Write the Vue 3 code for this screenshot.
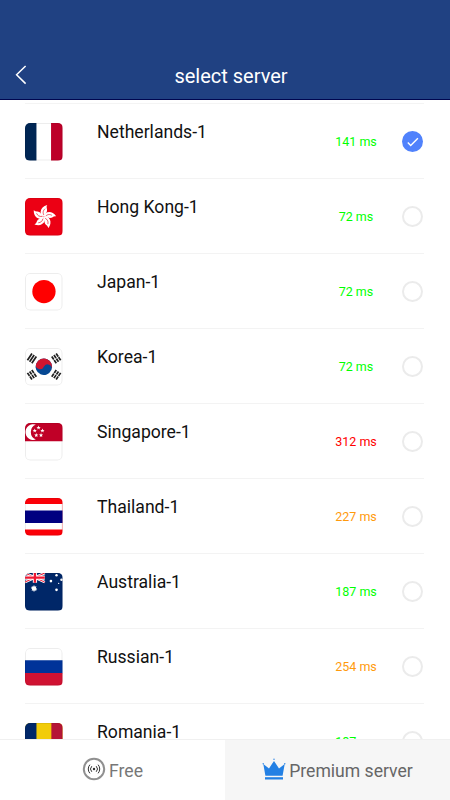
<script setup>
const servers = [
  { flag: 'nl', name: 'Netherlands-1', ping: 141, level: 'good', selected: true },
  { flag: 'hk', name: 'Hong Kong-1', ping: 72, level: 'good' },
  { flag: 'jp', name: 'Japan-1', ping: 72, level: 'good' },
  { flag: 'kr', name: 'Korea-1', ping: 72, level: 'good' },
  { flag: 'sg', name: 'Singapore-1', ping: 312, level: 'bad' },
  { flag: 'th', name: 'Thailand-1', ping: 227, level: 'medium' },
  { flag: 'au', name: 'Australia-1', ping: 187, level: 'good' },
  { flag: 'ru', name: 'Russian-1', ping: 254, level: 'medium' },
  { flag: 'ro', name: 'Romania-1', ping: 187, level: 'good' }
]
const petals = [0, 72, 144, 216, 288]
const stars = [[13.4, 4.6], [9.6, 7.6], [17.2, 7.6], [11.1, 12.1], [15.8, 12.1]]
const trigrams = [
  { x: 6.8, y: 10.2, a: -56 },
  { x: 30.8, y: 10.2, a: 56 },
  { x: 6.8, y: 26.4, a: 56 },
  { x: 30.8, y: 26.4, a: -56 }
]
</script>

<template>
  <div class="screen">
    <header class="header">
      <svg class="back" viewBox="0 0 12 20"><path d="M10.6 1 1.6 9.8l9 8.8" /></svg>
      <h1>select server</h1>
    </header>

    <main class="list">
      <div v-for="s in servers" :key="s.name" class="row">
        <svg class="flag" viewBox="0 0 37 37">
          <g v-if="s.flag === 'nl'">
            <path fill="#fff" d="M0 0h37v37H0z" />
            <path fill="#002654" d="M0 0h11.3v37H0z" />
            <path fill="#bd0029" d="M25.7 0H37v37H25.7z" />
          </g>
          <g v-else-if="s.flag === 'hk'">
            <path fill="#ec0014" d="M0 0h37v37H0z" />
            <g transform="translate(18.7 18.6) rotate(10)">
              <g v-for="a in petals" :key="a" :transform="`rotate(${a})`">
                <path fill="#fff" d="M-.6.600C-4.600-.8-6.500-8.500 1.200-12c-1.200 2.800 1.300 3.800.7 6.600C1.400-3.300-.2-2.400-.6.600z" />
                <path class="vein" d="M-.2-1.500C-2.300-4-1.800-6.200-.3-8.100" />
              </g>
            </g>
          </g>
          <g v-else-if="s.flag === 'jp'">
            <path fill="#fff" d="M0 0h37v37H0z" />
            <circle cx="18.7" cy="18.3" r="11.5" fill="#f00" />
          </g>
          <g v-else-if="s.flag === 'kr'">
            <path fill="#fff" d="M0 0h37v37H0z" />
            <g transform="translate(18.6 18.5) rotate(24)">
              <circle r="8.1" fill="#064893" />
              <path fill="#d0152f" d="M-8.1 0a8.1 8.1 0 0 1 16.2 0A4.05 4.05 0 0 0 0 0a4.05 4.05 0 0 1-8.1 0z" />
            </g>
            <g v-for="(t, i) in trigrams" :key="i" :transform="`translate(${t.x} ${t.y}) rotate(${t.a})`">
              <path class="bars" d="M-4-2.6h8M-4 0h8M-4 2.6h8" />
              <path v-if="i" class="gap" d="M0-4v8" />
            </g>
          </g>
          <g v-else-if="s.flag === 'sg'">
            <path fill="#fff" d="M0 0h37v37H0z" />
            <path fill="#c00027" d="M0 0h37v18H0z" />
            <path fill="#fff" d="M10.7 1.6a7.8 7.8 0 1 0 0 14.8 8 8 0 0 1 0-14.8z" />
            <path
              v-for="(p, i) in stars"
              :key="i"
              fill="#fff"
              :transform="`translate(${p[0]} ${p[1]})`"
              d="M0-2.2.6-.7 2.1-.7.9.3 1.3 1.8 0 .9-1.3 1.8-.9.3-2.1-.7-.6-.7z"
            />
          </g>
          <g v-else-if="s.flag === 'th'">
            <path fill="#fb0008" d="M0 0h37v37H0z" />
            <path fill="#fff" d="M0 6h37v25H0z" />
            <path fill="#000080" d="M0 12.3h37v12.4H0z" />
          </g>
          <g v-else-if="s.flag === 'au'">
            <path fill="#002768" d="M0 0h37v37H0z" />
            <path stroke="#fff" stroke-width="2.6" d="M0 0l19.5 9M19.5 0 0 9" />
            <path stroke="#ef1833" stroke-width="1" d="M0 0l19.5 9M19.5 0 0 9" />
            <path stroke="#fff" stroke-width="4.2" d="M9.8 0v9.5M0 4.5h19.5" />
            <path stroke="#ef1833" stroke-width="2.3" d="M9.8 0v9.5M0 4.5h19.5" />
            <circle cx="8.9" cy="15.3" r="2.3" fill="#fff" />
            <path stroke="#fff" stroke-width=".8" d="M8.9 12.2v6.2M5.9 14.500l6 1.600M6.9 17.500l4-4.400M7 13.200l3.900 4.300" />
            <g fill="#fff">
              <circle cx="25.6" cy="8" r="1.3" />
              <circle cx="31.1" cy="2.2" r="1.2" />
              <circle cx="36" cy="6.7" r="1.2" />
              <circle cx="33.2" cy="10.2" r=".7" />
              <circle cx="31.1" cy="16.6" r="1.3" />
            </g>
          </g>
          <g v-else-if="s.flag === 'ru'">
            <path fill="#fff" d="M0 0h37v12.3H0z" />
            <path fill="#003399" d="M0 12h37v13H0z" />
            <path fill="#d01232" d="M0 24.7h37V37H0z" />
          </g>
          <g v-else>
            <path fill="#f2cc09" d="M0 0h37v37H0z" />
            <path fill="#002768" d="M0 0h11.3v37H0z" />
            <path fill="#b51536" d="M26 0h11v37H26z" />
          </g>
          <rect class="outline" x=".5" y=".5" width="36" height="36" rx="4.5" />
        </svg>
        <span class="name">{{ s.name }}</span>
        <span class="ping" :class="s.level">{{ s.ping }} ms</span>
        <span class="radio" :class="{ selected: s.selected }">
          <svg v-if="s.selected" viewBox="0 0 21 21"><path d="M5.8 11.5l2.9 2.9 7.2-7.2" /></svg>
        </span>
      </div>
    </main>

    <nav class="tabs">
      <div class="tab free">
        <svg class="signal" viewBox="0 0 24 24">
          <circle class="ring" cx="12" cy="12" r="10.2" />
          <circle cx="12" cy="12" r="1.2" fill="#333" />
          <path class="wave" d="M9.8 9.2a4 4 0 0 0 0 5.600M14.2 9.2a4 4 0 0 1 0 5.600M7.9 7.7a6.5 6.5 0 0 0 0 8.600M16.1 7.7a6.5 6.5 0 0 1 0 8.600" />
        </svg>
        <span>Free</span>
      </div>
      <div class="tab premium">
        <svg class="crown" viewBox="0 0 24 22">
          <g fill="#2380e4">
            <path d="M1.3 6 7 10.6l5-7.7 5 7.7L22.7 6 20.6 17.800H3.400z" />
            <circle cx="12" cy="1.3" r=".7" />
            <circle cx="1.2" cy="5.8" r=".7" />
            <circle cx="22.8" cy="5.8" r=".7" />
            <path d="M3 19.200h18v2.300H3z" />
          </g>
        </svg>
        <span>Premium server</span>
      </div>
    </nav>
  </div>
</template>

<style>
body {
  margin: 0;
  overflow: hidden;
}
</style>

<style scoped>
.screen {
  width: 450px;
  height: 800px;
  display: flex;
  flex-direction: column;
  background: #fff;
  font-family: Roboto, "Liberation Sans", sans-serif;
  color: #111;
  overflow: hidden;
}
.header {
  flex: none;
  box-sizing: border-box;
  height: 100px;
  padding: 50px 16px 0 15px;
  display: grid;
  grid-template-columns: 12px 1fr 0;
  align-items: center;
  background: #204182;
  border-bottom: 1px solid #00064f;
}
.header h1 {
  margin: 2px 0 0 1px;
  font-size: 20px;
  font-weight: 400;
  color: #fff;
  text-align: center;
}
.back {
  width: 12px;
  height: 20px;
}
.back path {
  fill: none;
  stroke: #fff;
  stroke-width: 1.5;
}
.list {
  flex: 1;
  min-height: 0;
  overflow: hidden;
  padding: 3px 26px 0 25px;
}
.list::before {
  content: "";
  display: block;
  height: 1px;
  background: #f4f4f4;
}
.row {
  box-sizing: border-box;
  height: 75px;
  padding: 19px 1px 0 0;
  display: grid;
  grid-template-columns: 72px 1fr 54px 40px;
  align-items: start;
  border-bottom: 1px solid #f3f3f3;
}
.flag {
  width: 37.5px;
  height: 37.5px;
  border-radius: 5px;
}
.outline {
  fill: none;
  stroke: #000;
  stroke-opacity: 0.07;
}
.vein {
  fill: none;
  stroke: #ec0014;
  stroke-width: 0.6;
}
.bars {
  stroke: #222;
  stroke-width: 1.7;
}
.gap {
  stroke: #fff;
  stroke-width: 0.7;
}
.name {
  font-size: 17.6px;
  line-height: 20px;
  margin-top: -1px;
  white-space: nowrap;
}
.ping {
  font-size: 12.5px;
  line-height: 18px;
  margin-top: 10px;
  text-align: center;
  white-space: nowrap;
}
.good {
  color: #0f0;
}
.medium {
  color: #ff9a0c;
}
.bad {
  color: #f00;
}
.radio {
  box-sizing: border-box;
  width: 21px;
  height: 21px;
  margin-top: 8px;
  justify-self: end;
  border: 2px solid #ebebeb;
  border-radius: 50%;
}
.radio.selected {
  border: 0;
  background: #5082fc;
}
.radio svg {
  display: block;
  width: 21px;
  height: 21px;
}
.radio path {
  fill: none;
  stroke: #fff;
  stroke-width: 1.4;
}
.tabs {
  flex: none;
  height: 61px;
  display: grid;
  grid-template-columns: 1fr 1fr;
}
.tab {
  box-sizing: border-box;
  display: flex;
  align-items: center;
  justify-content: center;
  gap: 3px;
  font-size: 17.6px;
  color: #777;
  border-top: 1px solid #f0f0f0;
}
.tab span {
  margin-top: 1px;
}
.tab svg {
  margin-top: -2px;
}
.premium {
  background: #f6f6f6;
  color: #666;
}
.signal {
  width: 24px;
  height: 24px;
}
.ring {
  fill: none;
  stroke: #909090;
  stroke-width: 2;
}
.wave {
  fill: none;
  stroke: #333;
  stroke-width: 1;
}
.crown {
  width: 24px;
  height: 22px;
}
</style>
